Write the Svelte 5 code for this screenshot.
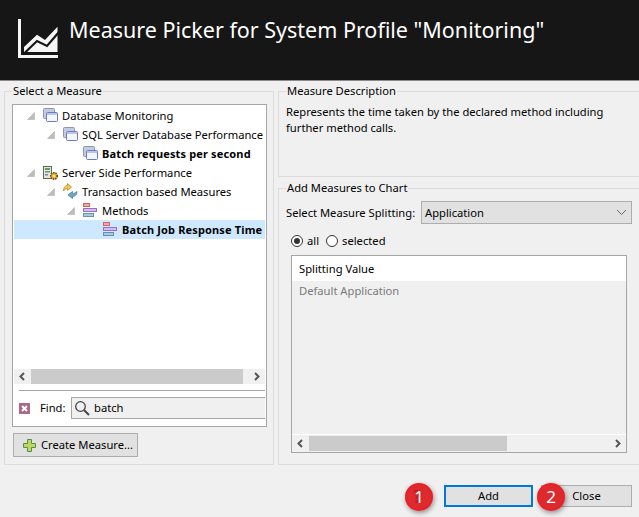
<script>
  const rows = [
    { d: 0, icon: 'db', text: 'Database Monitoring', open: true },
    { d: 1, icon: 'db', text: 'SQL Server Database Performance', open: true },
    { d: 2, icon: 'db', text: 'Batch requests per second', bold: true },
    { d: 0, icon: 'srv', text: 'Server Side Performance', open: true },
    { d: 1, icon: 'tx', text: 'Transaction based Measures', open: true },
    { d: 2, icon: 'bars', text: 'Methods', open: true },
    { d: 3, icon: 'bars', text: 'Batch Job Response Time', bold: true, sel: true }
  ];
</script>

{#snippet arrowL()}
  <svg class="arr" width="9" height="9" viewBox="0 0 9 9"><path d="M6 1 2.500 4.500 6 8" fill="none" stroke="#555" stroke-width="2"/></svg>
{/snippet}
{#snippet arrowR()}
  <svg class="arr" width="9" height="9" viewBox="0 0 9 9"><path d="M3 1 6.500 4.500 3 8" fill="none" stroke="#555" stroke-width="2"/></svg>
{/snippet}

<div class="win">
  <header class="head">
    <svg class="logo" width="42" height="42" viewBox="0 0 42 42">
      <path d="M1.500 1V38.500H40" fill="none" stroke="#f6f6f6" stroke-width="3"/>
      <path d="M6 29 19 16.700 27 22 39.500 8.700V34H6Z" fill="#f6f6f6"/>
      <path d="M5 36.500 19 23 29 28 41 14" fill="none" stroke="#161616" stroke-width="2.200"/>
    </svg>
    <h1>Measure Picker for System Profile "Monitoring"</h1>
  </header>

  <main class="body">
    <section class="group left">
      <span class="legend">Select a Measure</span>
      <div class="treebox">
        <div class="tree">
          {#each rows as r}
            <div class="row" class:sel={r.sel} style="padding-left:{r.d * 20 + 13}px">
              <span class="twist">
                {#if r.open}
                  <svg width="8" height="8" viewBox="0 0 8 8"><path d="M7.500 0.500V7.500H0.500Z" fill="#bdbdbd" stroke="#a8a8a8" stroke-width="0.500"/></svg>
                {/if}
              </span>
              <span class="ico">
                {#if r.icon === 'db'}
                  <svg width="16" height="19" viewBox="0 0 16 19">
                    <rect x="0.500" y="2.500" width="11" height="10" rx="1" fill="#c3cbdf" stroke="#8b94b4"/>
                    <rect x="3.500" y="6.500" width="11" height="9" rx="1" fill="#f4f6fb" stroke="#6d7cc0"/>
                    <rect x="4" y="7" width="10" height="2" fill="#b9c6e6"/>
                  </svg>
                {:else if r.icon === 'srv'}
                  <svg width="18" height="19" viewBox="0 0 18 19">
                    <rect x="0.500" y="3.500" width="8" height="12" fill="#e4e7dc" stroke="#5e6856"/>
                    <rect x="2" y="5" width="5" height="2" fill="#5aa35a"/>
                    <rect x="2" y="8" width="5" height="1.500" fill="#7d8796"/>
                    <rect x="2" y="11" width="3" height="1.500" fill="#7d8796"/>
                    <circle cx="11" cy="13" r="3.200" fill="#efb93d" stroke="#6e4f10" stroke-width="1.700" stroke-dasharray="1.500 0.800"/>
                    <circle cx="11" cy="13" r="1.100" fill="#fff3c4"/>
                  </svg>
                {:else if r.icon === 'tx'}
                  <svg width="16" height="19" viewBox="0 0 16 19">
                    <path d="M0.500 9C0.500 5 2.500 3.500 4.500 3.500V1.500L8.500 5 4.500 8.500V6.500C3 6.500 1.500 7.500 0.500 9Z" fill="#f0c85f" stroke="#b38a26" stroke-width="0.800"/>
                    <path d="M14 9.500C14 13 12 14.500 9.500 14.500V16.500L5 13 9.500 9.500V11.500C11 11.500 12.500 11 14 9.500Z" fill="#6fa8c8" stroke="#4a7d9b" stroke-width="0.800"/>
                  </svg>
                {:else}
                  <svg width="16" height="19" viewBox="0 0 16 19">
                    <rect x="0.500" y="2.500" width="6" height="3" fill="#f2a9a2" stroke="#d2645c"/>
                    <rect x="0.500" y="7.500" width="13" height="3" fill="#d4bdea" stroke="#9a6fc9"/>
                    <rect x="0.500" y="12.500" width="10" height="3" fill="#a9cbe0" stroke="#5f94b5"/>
                  </svg>
                {/if}
              </span>
              <span class="label" class:bold={r.bold}>{r.text}</span>
            </div>
          {/each}
        </div>
        <div class="hbar">
          {@render arrowL()}
          <div class="track"><div class="thumb th-left"></div></div>
          {@render arrowR()}
        </div>
        <div class="sep"></div>
        <div class="find">
          <svg width="11" height="11" viewBox="0 0 11 11"><rect width="11" height="11" fill="#a8688a"/><path d="M3 3 8 8M8 3 3 8" stroke="#fff" stroke-width="2"/></svg>
          <span class="findlabel">Find:</span>
          <div class="findinput">
            <svg width="16" height="16" viewBox="0 0 16 16"><circle cx="6.500" cy="6.500" r="4.800" fill="none" stroke="#444" stroke-width="1.300"/><path d="M10 10 15 15" stroke="#444" stroke-width="2"/></svg>
            <span>batch</span>
          </div>
        </div>
      </div>
      <button class="btn create">
        <svg width="13" height="13" viewBox="0 0 13 13"><path d="M4.500 0.500H8.500V4.500H12.500V8.500H8.500V12.500H4.500V8.500H0.500V4.500H4.500Z" fill="#c3d65a" stroke="#4e9055"/></svg>
        Create Measure...
      </button>
    </section>

    <div class="right">
      <section class="group desc">
        <span class="legend">Measure Description</span>
        <p>Represents the time taken by the declared method including further method calls.</p>
      </section>
      <section class="group add">
        <span class="legend">Add Measures to Chart</span>
        <div class="split">
          <span class="splitlabel">Select Measure Splitting:</span>
          <div class="combo">
            <span>Application</span>
            <svg width="11" height="7" viewBox="0 0 11 7"><path d="M1 1 5.500 5.500 10 1" fill="none" stroke="#666"/></svg>
          </div>
        </div>
        <div class="radios">
          <span class="radio on"></span><span class="rl">all</span>
          <span class="radio off"></span><span class="rl">selected</span>
        </div>
        <div class="table">
          <div class="th">Splitting Value</div>
          <div class="td">Default Application</div>
          <div class="hbar tb">
            {@render arrowL()}
            <div class="track"><div class="thumb th-right"></div></div>
            {@render arrowR()}
          </div>
        </div>
      </section>
    </div>
  </main>

  <footer class="foot">
    <span class="badge ghost"><span class="num">1</span></span>
    <button class="btn primary">Add</button>
    <span class="badge b2"><span class="num">2</span></span>
    <button class="btn close">Close</button>
  </footer>
</div>

<style>
  :global(body) { margin: 0; background: #f0f0f0; }
  .win {
    width: 639px; height: 517px; overflow: hidden; background: #f0f0f0;
    font: 11.2px/16px "Noto Sans", "Open Sans", sans-serif; color: #000;
    display: flex; flex-direction: column;
  }
  .head {
    height: 81px; box-sizing: border-box; flex: none; background: #161616; color: #fff;
    display: flex; align-items: flex-start; padding: 18px 0 0 18px;
    border-bottom: 1px solid #8a8a8a;
  }
  .logo { flex: none; }
  h1 { margin: -1px 0 0 9px; font: 400 21.5px/26px "Noto Sans", sans-serif; }
  .body { display: flex; gap: 4px; padding: 10px 0 0 4px; height: 384px; box-sizing: border-box; flex: none; }
  .group { border: 1px solid #dcdcdc; position: relative; box-sizing: border-box; }
  .legend {
    position: absolute; top: -9px; left: 7px; padding: 0 1px; background: #f0f0f0; white-space: nowrap;
  }
  .left { width: 270px; height: 374px; padding: 12px 6px 0 7px; }
  .treebox {
    width: 255px; height: 323px; box-sizing: border-box; background: #fff; border: 1px solid #a6a6a6;
    padding: 1px; display: flex; flex-direction: column;
  }
  .tree { height: 264px; flex: none; }
  .row { height: 19px; display: flex; align-items: center; white-space: nowrap; overflow: hidden; box-sizing: border-box; }
  .row.sel { background: #cde8ff; }
  .twist { width: 16px; flex: none; display: flex; }
  .ico { width: 19px; flex: none; display: flex; }
  .label { flex: none; }
  .bold { font-weight: 700; font-size: 11px; letter-spacing: 0.15px; }
  .hbar { height: 15px; flex: none; display: flex; align-items: center; background: #f0f0f0; margin-top: -1px; }
  .arr { flex: none; margin: 0 4px; }
  .track { flex: 1; height: 15px; }
  .thumb { height: 15px; background: #cbcbcb; }
  .th-left { width: 212px; }
  .sep { height: 1px; background: #a6a6a6; margin: 6px 0 0 5px; flex: none; }
  .find { display: flex; align-items: center; margin: 6px 0 0 5px; flex: none; }
  .findlabel { margin-left: 10px; width: 26px; }
  .findinput {
    margin-left: 5px; flex: 1; height: 22px; box-sizing: border-box; background: #f0f0f0;
    border: 1px solid #a6a6a6; border-right: 0; display: flex; align-items: center; gap: 4px; padding-left: 2px;
  }
  .btn {
    font: inherit; color: #000; background: #e1e1e1; border: 1px solid #adadad; padding: 0; box-sizing: border-box;
    display: flex; align-items: center; justify-content: center;
  }
  .create { width: 125px; height: 24px; margin-top: 6px; margin-left: 1px; gap: 5px; justify-content: flex-start; padding-left: 9px; }
  .right { width: 361px; display: flex; flex-direction: column; gap: 11px; }
  .desc { height: 86px; border-right: 0; padding: 12px 7px 0; }
  .desc p { margin: 0; width: 340px; }
  .add { height: 277px; border-right: 0; }
  .split { display: flex; align-items: center; margin: 12px 0 0 7px; height: 23px; }
  .splitlabel { width: 135px; white-space: nowrap; flex: none; }
  .combo {
    width: 211px; height: 23px; box-sizing: border-box; background: #e1e1e1; border: 1px solid #adadad;
    display: flex; align-items: center; justify-content: space-between; padding: 0 4px 0 3px;
  }
  .radios { display: flex; align-items: center; margin: 6px 0 0 12px; height: 22px; }
  .radio { width: 12px; height: 12px; border: 1px solid #333; border-radius: 50%; background: #fff; box-sizing: border-box; position: relative; flex: none; }
  .radio.on::after { content: ""; position: absolute; inset: 2px; background: #333; border-radius: 50%; }
  .rl { margin-left: 4px; }
  .radio.off { margin-left: 7px; }
  .table {
    margin: 3px 0 0 12px; width: 336px; height: 198px; box-sizing: border-box; border: 1px solid #a6a6a6;
    display: flex; flex-direction: column; background: #f0f0f0;
  }
  .th { height: 25px; background: #fff; padding-left: 7px; display: flex; align-items: center; flex: none; }
  .td { height: 19px; padding-left: 7px; color: #7a7a7a; display: flex; align-items: center; flex: none; }
  .tb { margin-top: auto; margin-bottom: 1px; border-top: 1px solid #fff; height: 16px; }
  .th-right { width: 198px; }
  .foot { flex: 1; position: relative; display: flex; justify-content: flex-end; align-items: flex-start; padding: 20px 7px 0 0; }
  .primary { width: 89px; height: 22px; border: 2px solid #0078d7; margin-right: 8px; }
  .close { width: 91px; height: 22px; }
  .badge {
    position: absolute; left: 405px; top: 18px; width: 28px; height: 28px; border-radius: 50%; box-sizing: border-box;
    background: #dc2a2e; color: #fff; font-size: 17px; display: flex; align-items: center; justify-content: center;
    border: 2px solid #ee1f24; box-shadow: 1px 2px 5px rgba(0,0,0,.4);
  }
  .ghost::before { content: "?"; position: absolute; left: 6px; top: 3px; font-size: 18px; font-weight: 700; color: #c21e24; }
  .num { position: relative; z-index: 1; }
  .b2 { left: 537px; }
</style>
